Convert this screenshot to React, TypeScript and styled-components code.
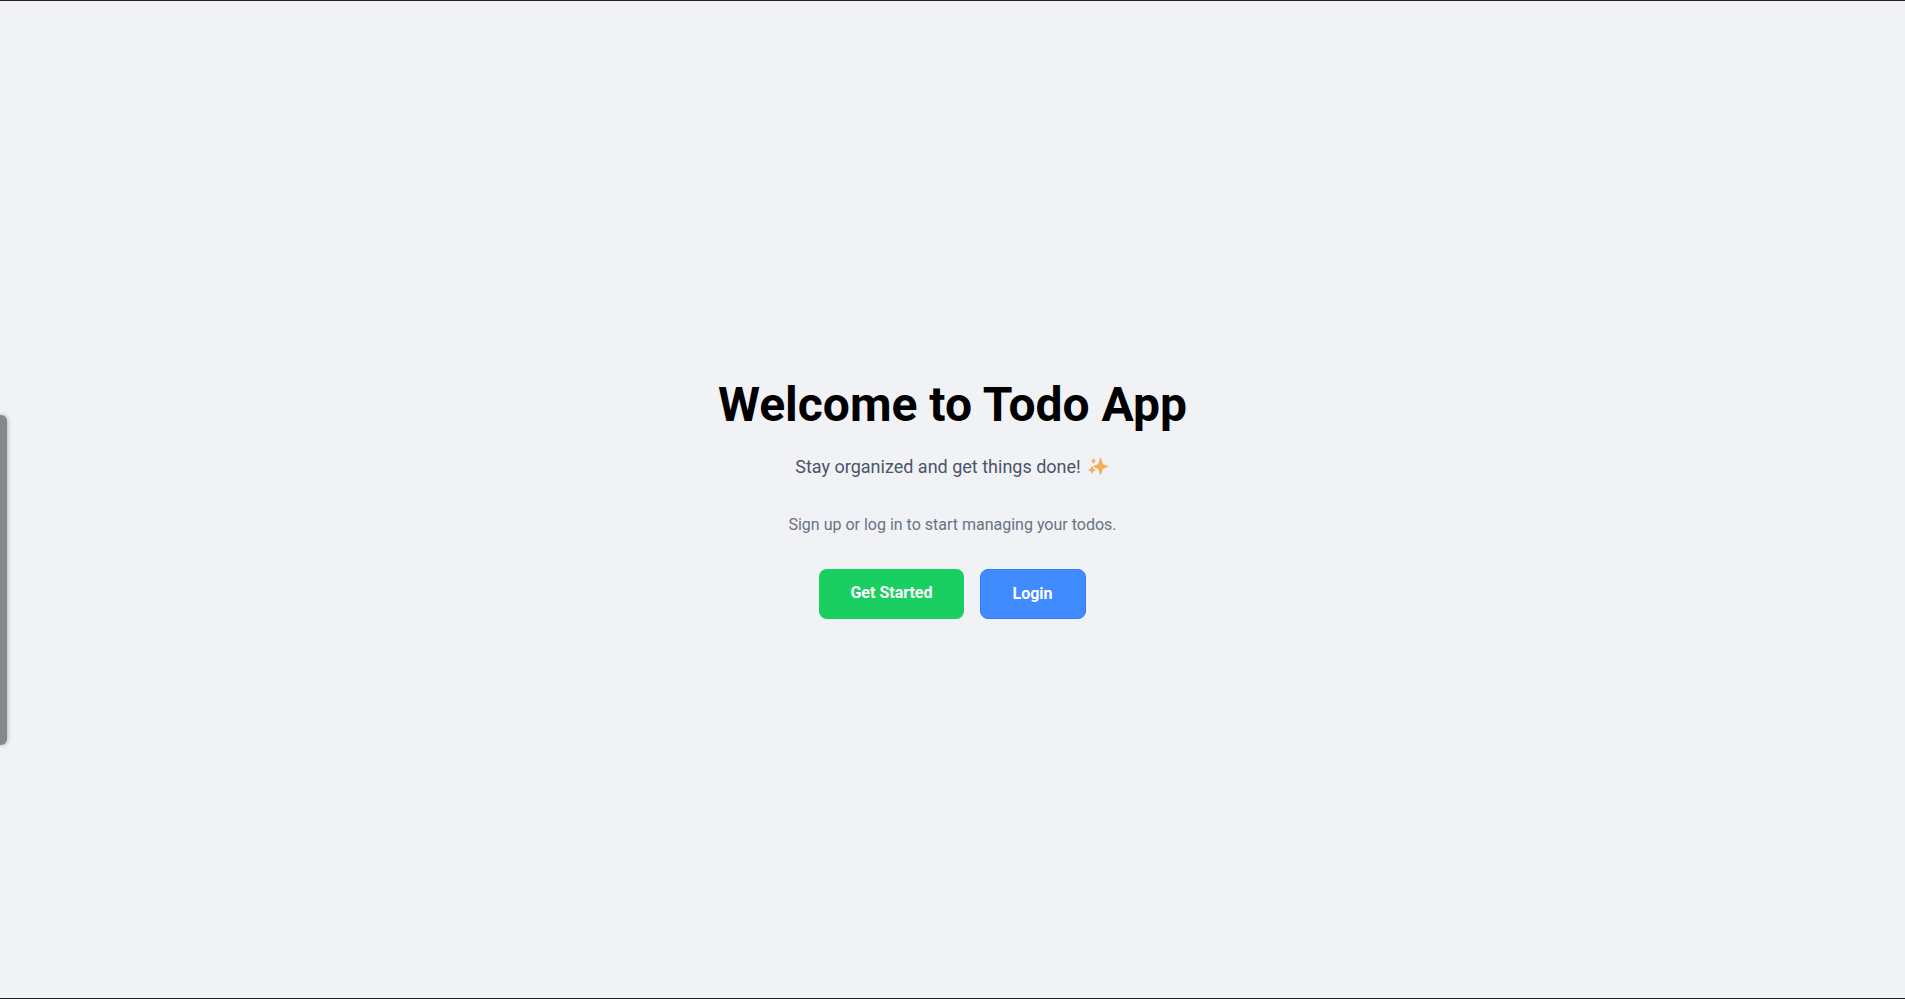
import React from "react";
import styled, { createGlobalStyle } from "styled-components";

const GlobalStyle = createGlobalStyle`
  *, *::before, *::after { box-sizing: border-box; }
  body { margin: 0; background: #f0f2f6; font-family: Roboto, sans-serif; }
  h1, p { margin: 0; }
`;

const Page = styled.main`
  position: relative;
  min-height: 100vh;
  display: flex;
  flex-direction: column;
  align-items: center;
  justify-content: center;
  border-top: 1px solid #24222c;
  border-bottom: 1px solid #1c1d28;
  overflow: hidden;
`;

const Title = styled.h1`
  margin-bottom: 24px;
  font-size: 48px;
  line-height: 48px;
  font-weight: 700;
  color: #000;
`;

const Tagline = styled.p`
  display: flex;
  align-items: center;
  gap: 4px;
  margin-bottom: 32px;
  font-size: 18px;
  line-height: 28px;
  color: #4a5565;
`;

const Hint = styled.p`
  margin-bottom: 32px;
  font-size: 16px;
  line-height: 24px;
  color: #6a7282;
`;

const Actions = styled.div`
  display: flex;
  gap: 16px;
`;

const Button = styled.button<{ $variant: "primary" | "outlined" }>`
  display: flex;
  padding: ${(p) => (p.$variant === "primary" ? "12px 31px" : "12px 32px")};
  border: ${(p) => (p.$variant === "primary" ? "none" : "1px solid #2b7fff")};
  border-radius: 8px;
  background: ${(p) => (p.$variant === "primary" ? "#19cf61" : "#3f8bff")};
  color: #fff;
  font: 700 16px/24px Roboto, sans-serif;
`;

const SideHandle = styled.div`
  position: absolute;
  left: 0;
  top: 414px;
  width: 7px;
  height: 330px;
  border-radius: 0 6px 6px 0;
  background: #868789;
  box-shadow: 0 0 5px rgba(0, 0, 0, 0.35);
`;

const Sparkles = () => (
  <svg width="25" height="20" viewBox="0 0 25 20" fill="#f5ac5a" role="img" aria-label="sparkles">
    <path d="M15.500 0.500 C16.300 0.500 17 6 18 7 C19 8 23 8.500 23 9.500 C23 10.500 19 11 18 12 C17 13 16.300 18 15.500 18 C14.700 18 14 13 13 12 C12 11 8.500 10.500 8.500 9.500 C8.500 8.500 12 8 13 7 C14 6 14.700 0.500 15.500 0.500Z" />
    <path d="M8.500 1 Q9.300 3.400 11 4 Q9.300 4.600 8.500 7 Q7.700 4.600 6 4 Q7.700 3.400 8.500 1Z" />
    <path d="M7 9 Q8 12.300 11 13 Q8 13.700 7 17 Q6 13.700 3 13 Q6 12.300 7 9Z" />
  </svg>
);

export default function App() {
  return (
    <>
      <GlobalStyle />
      <Page>
        <SideHandle />
        <Title>Welcome to Todo App</Title>
        <Tagline>
          Stay organized and get things done! <Sparkles />
        </Tagline>
        <Hint>Sign up or log in to start managing your todos.</Hint>
        <Actions>
          <Button $variant="primary">Get Started</Button>
          <Button $variant="outlined">Login</Button>
        </Actions>
      </Page>
    </>
  );
}
